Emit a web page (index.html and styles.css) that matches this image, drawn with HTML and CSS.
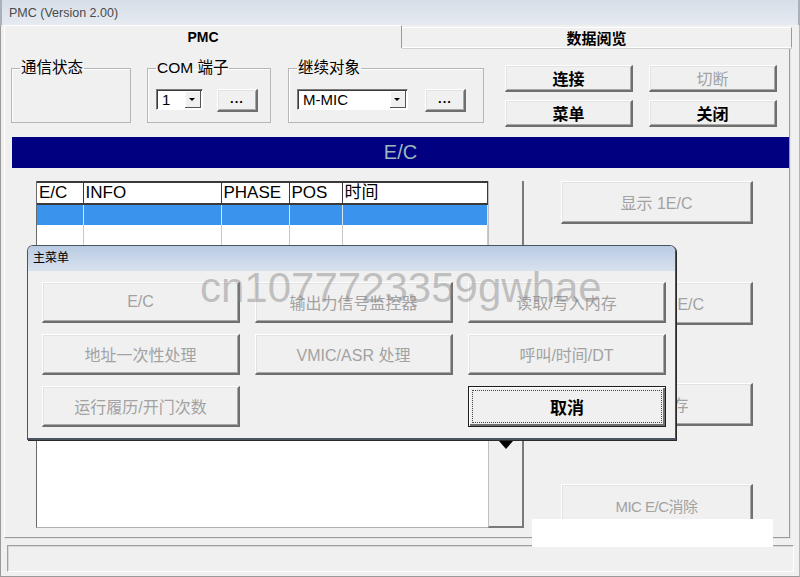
FILE: index.html
```html
<!DOCTYPE html>
<html lang="zh">
<head>
    <meta charset="UTF-8">
    <title>PMC (Version 2.00)</title>
    <link rel="stylesheet" href="styles.css">
</head>
<body>

    <div class="titlebar">PMC (Version 2.00)</div>

    <div class="window">
        <div class="tabs">
            <div class="tab tab-active">PMC</div>
            <div class="tab tab-other">数据阅览</div>
        </div>

        <div class="panel">
            <div class="top-row">
                <fieldset class="group group-status">
                    <legend>通信状态</legend>
                </fieldset>

                <fieldset class="group group-com">
                    <legend>COM 端子</legend>
                    <div class="group-row">
                        <div class="combo combo-com"><span>1</span><i class="drop"></i></div>
                        <button class="btn btn-dots">...</button>
                    </div>
                </fieldset>

                <fieldset class="group group-target">
                    <legend>继续对象</legend>
                    <div class="group-row">
                        <div class="combo combo-target"><span>M-MIC</span><i class="drop"></i></div>
                        <button class="btn btn-dots">...</button>
                    </div>
                </fieldset>

                <div class="ctrl-buttons">
                    <button class="btn btn-strong">连接</button>
                    <button class="btn btn-off">切断</button>
                    <button class="btn btn-strong">菜单</button>
                    <button class="btn btn-strong">关闭</button>
                </div>
            </div>

            <div class="ec-bar">E/C</div>

            <div class="main-area">
                <div class="list">
                    <table>
                        <colgroup>
                            <col style="width:46px">
                            <col style="width:138px">
                            <col style="width:68px">
                            <col style="width:53px">
                            <col>
                        </colgroup>
                        <thead>
                            <tr><th>E/C</th><th>INFO</th><th>PHASE</th><th>POS</th><th>时间</th></tr>
                        </thead>
                        <tbody>
                            <tr class="selected"><td></td><td></td><td></td><td></td><td></td></tr>
                            <tr><td></td><td></td><td></td><td></td><td></td></tr>
                        </tbody>
                    </table>
                </div>
                <div class="scroll"><i class="scroll-arrow"></i></div>
                <div class="side-buttons">
                    <button class="btn btn-off btn-side">显示 1E/C</button>
                    <button class="btn btn-off btn-side">显示全部 E/C</button>
                    <button class="btn btn-off btn-side">数据保存</button>
                    <button class="btn btn-off btn-side btn-narrow">MIC E/C消除</button>
                </div>
            </div>
        </div>

        <div class="statusbar"></div>
    </div>

    <!-- 主菜单 dialog over the main window -->
    <div class="dialog">
        <div class="dialog-title">主菜单</div>
        <div class="dialog-grid">
            <button class="btn btn-off btn-menu">E/C</button>
            <button class="btn btn-off btn-menu">输出力信号监控器</button>
            <button class="btn btn-off btn-menu">读取/写入内存</button>
            <button class="btn btn-off btn-menu">地址一次性处理</button>
            <button class="btn btn-off btn-menu">VMIC/ASR 处理</button>
            <button class="btn btn-off btn-menu">呼叫/时间/DT</button>
            <button class="btn btn-off btn-menu">运行履历/开门次数</button>
            <span></span>
            <button class="btn btn-menu btn-cancel"><span>取消</span></button>
        </div>
    </div>

    <div class="watermark">cn1077723359gwhae</div>
    <div class="mask"></div>

</body>
</html>
```

FILE: styles.css
```css
* {
    box-sizing: border-box;
}
body {
    margin: 0;
    width: 800px;
    height: 577px;
    overflow: hidden;
    position: relative;
    background-color: #f0f0f0;
    font-family: "Liberation Sans", "Noto Sans CJK SC", sans-serif;
    color: #000;
}
.titlebar {
    height: 25px;
    padding: 0 7px;
    line-height: 26px;
    font-size: 12.5px;
    color: #4a4a4a;
    background: linear-gradient(#d6dee8, #e6ebf0);
    border-left: 2px solid #a9b1ba;
    border-right: 2px solid #a9b1ba;
}
.window {
    height: 552px;
    padding: 0 9px 0 3px;
    border-left: 1px solid #9a9a9a;
    border-right: 1px solid #b5b5b5;
    border-bottom: 1px solid #9a9a9a;
}

/* tabs */
.tabs {
    display: flex;
    height: 23px;
}
.tab {
    font-size: 14px;
    font-weight: bold;
    text-align: center;
}
.tab-active {
    width: 398px;
    border-top: 1px solid #fff;
    border-left: 1px solid #fff;
    border-right: 1px solid #9a9a9a;
    line-height: 22px;
}
.tab-other {
    flex: 1;
    margin-top: 2px;
    margin-right: -2px;
    border-top: 1px solid #fff;
    border-right: 1px solid #9a9a9a;
    border-bottom: 1px solid #fff;
    box-shadow: 0 1px 0 #d0d0d0;
    font-size: 15px;
    line-height: 22px;
}
.panel {
    height: 490px;
    padding: 11px 0 0 6px;
    border-left: 1px solid #fff;
    border-right: 1px solid #9a9a9a;
    border-bottom: 1px solid #9a9a9a;
    box-shadow: 1px 1px 0 #e4e4e4;
}

/* group boxes */
.top-row {
    display: flex;
    align-items: flex-start;
}
.group {
    margin: 0;
    height: 64px;
    padding: 12px 8px 0 8px;
    border: 1px solid #b6b6b6;
    box-shadow: inset 1px 1px 0 #fff;
}
.group legend {
    padding: 0 1px;
    font-size: 15.5px;
    line-height: 18px;
}
.group-status {
    width: 120px;
    margin-right: 16px;
}
.group-com {
    width: 124px;
    margin-right: 17px;
}
.group-target {
    width: 196px;
    margin-right: 21px;
}
.group-row {
    display: flex;
    align-items: flex-start;
}
.combo {
    display: flex;
    align-items: center;
    height: 21px;
    background: #fff;
    border: 1px solid;
    border-color: #7a7a7a #fff #fff #7a7a7a;
    box-shadow: inset 1px 1px 0 #3c3c3c;
    font-size: 15px;
    padding: 0 1px 0 5px;
}
.combo span {
    flex: 1;
}
.combo-com {
    width: 47px;
    margin-right: 14px;
}
.combo-target {
    width: 111px;
    margin-right: 17px;
}
.drop {
    width: 16px;
    height: 17px;
    background: #f0f0f0;
    border-right: 1px solid #555;
    border-bottom: 1px solid #555;
    box-shadow: inset 1px 1px 0 #fff;
    position: relative;
}
.drop::after {
    content: "";
    position: absolute;
    left: 4px;
    top: 7px;
    border-left: 3px solid transparent;
    border-right: 3px solid transparent;
    border-top: 3px solid #000;
}

/* classic buttons */
.btn {
    display: flex;
    align-items: center;
    justify-content: center;
    padding: 0;
    background: #f0f0f0;
    border-top: 1px solid #fff;
    border-left: 1px solid #fff;
    border-right: 2px solid #6f6f6f;
    border-bottom: 2px solid #6f6f6f;
    box-shadow: inset 1px 1px 0 #e2e2e2, inset -1px -1px 0 #a8a8a8;
    font-family: inherit;
    font-size: 16px;
    color: #000;
}
.btn-dots {
    width: 41px;
    height: 23px;
    font-size: 13px;
    font-weight: bold;
    letter-spacing: 1px;
    padding-bottom: 4px;
}
.btn-strong {
    font-weight: bold;
}
.btn-off {
    color: #a2a2a2;
}
.ctrl-buttons {
    display: grid;
    grid-template-columns: 128px 128px;
    grid-auto-rows: 27px;
    gap: 8px 16px;
    margin-top: 6px;
}

.ec-bar {
    height: 31px;
    margin: 10px 0 0 1px;
    background: #000080;
    color: #9cb9bd;
    font-size: 20px;
    line-height: 31px;
    text-align: center;
}

/* list area */
.main-area {
    display: flex;
    height: 347px;
    margin-top: 13px;
    padding-left: 25px;
}
.list {
    width: 452px;
    background: #fff;
    border-left: 1px solid #6a6a6a;
    border-bottom: 1px solid #b0b0b0;
}
.list table {
    width: 100%;
    table-layout: fixed;
    border-collapse: collapse;
}
.list th {
    height: 22px;
    padding: 0 0 0 2px;
    text-align: left;
    font-size: 17px;
    font-weight: normal;
    line-height: 18px;
    border-top: 2px solid #3a3a3a;
    border-bottom: 2px solid #3a3a3a;
    border-right: 1px solid #3a3a3a;
}
.list td {
    height: 21px;
    border-right: 1px solid #c8c8c8;
}
.list tr.selected td {
    background: #3a93ec;
    border-right-color: #d8e6f4;
}
.scroll {
    width: 36px;
    display: flex;
    justify-content: center;
    padding-top: 260px;
    border-left: 1px solid #c0c0c0;
    border-right: 2px solid #7a7a7a;
    border-bottom: 2px solid #7a7a7a;
}
.scroll-arrow {
    width: 0;
    height: 0;
    border-left: 7px solid transparent;
    border-right: 7px solid transparent;
    border-top: 8px solid #000;
}
.side-buttons {
    display: flex;
    flex-direction: column;
    gap: 58px;
    width: 192px;
    margin-left: 37px;
}
.btn-side {
    height: 43px;
    flex-shrink: 0;
}
.btn-narrow {
    letter-spacing: -0.5px;
    font-size: 15px;
}

.statusbar {
    height: 27px;
    margin: 7px -4px 0 3px;
    border: 1px solid;
    border-color: #a0a0a0 #fff #fff #a0a0a0;
    box-shadow: inset 1px 1px 0 #d8d8d8;
}

/* dialog */
.dialog {
    position: absolute;
    left: 27px;
    top: 245px;
    width: 649px;
    height: 195px;
    background: #f0f0f0;
    border: 1px solid #4a5560;
    border-bottom-width: 2px;
    border-radius: 6px 6px 0 0;
    box-shadow: 1px 1px 0 #2a2a2a;
}
.dialog-title {
    height: 25px;
    padding-left: 5px;
    line-height: 25px;
    font-size: 12px;
    border-radius: 5px 5px 0 0;
    background: linear-gradient(#b9cbe2, #d8e2ee);
}
.dialog-grid {
    display: grid;
    grid-template-columns: repeat(3, 198px);
    grid-auto-rows: 41px;
    gap: 11px 15px;
    padding: 11px 0 0 14px;
}
.btn-cancel {
    font-weight: bold;
    font-size: 17px;
    border: 1px solid #1e1e1e;
    box-shadow: inset 1px 1px 0 #fff, inset -2px -2px 0 #6f6f6f;
    padding: 3px;
}
.btn-cancel span {
    width: 100%;
    height: 100%;
    display: flex;
    align-items: center;
    justify-content: center;
    border: 1px dotted #444;
}

.watermark {
    position: absolute;
    left: 200px;
    top: 267px;
    font-size: 42px;
    line-height: 42px;
    color: rgba(130, 130, 130, 0.45);
    white-space: nowrap;
}
.mask {
    position: absolute;
    left: 532px;
    top: 519px;
    width: 241px;
    height: 28px;
    background: #fff;
}
```
